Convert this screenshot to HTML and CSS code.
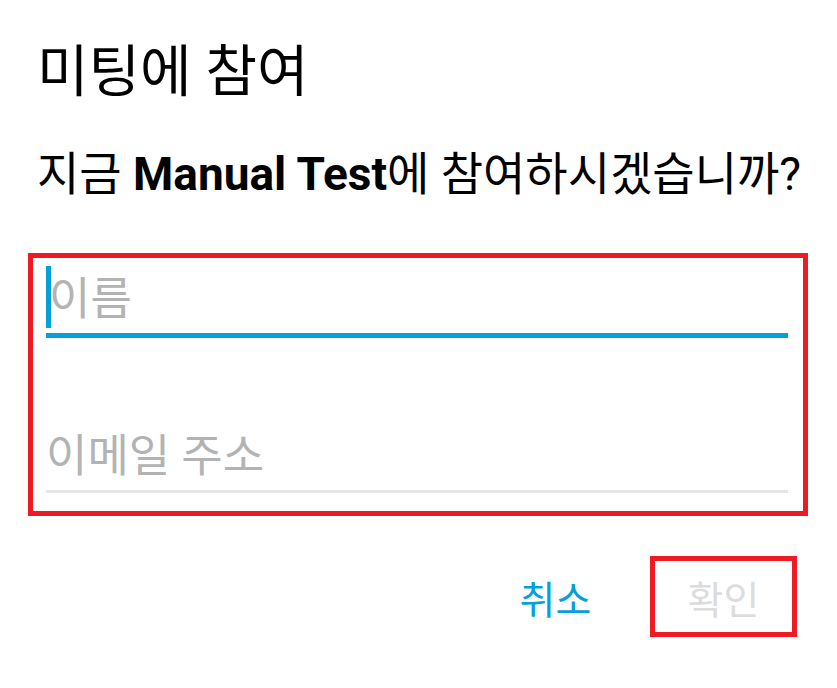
FILE: index.html
```html
<!DOCTYPE html>
<html lang="ko">
<head>
  <meta charset="UTF-8" />
  <meta name="viewport" content="width=device-width, initial-scale=1" />
  <title>미팅에 참여</title>
  <link rel="stylesheet" href="styles.css">
</head>
<body>
  <div class="dialog">
    <!-- Dialog heading -->
    <h1 class="title">미팅에 참여</h1>
    <p class="message">지금 <strong>Manual Test</strong>에 참여하시겠습니까?</p>

    <!-- Input fields (outlined) -->
    <div class="fields">
      <div class="field active">
        <span class="cursor"></span>
        <span class="placeholder">이름</span>
      </div>
      <div class="field">
        <span class="placeholder">이메일 주소</span>
      </div>
    </div>

    <!-- Buttons -->
    <div class="actions">
      <button class="btn cancel">취소</button>
      <button class="btn ok" disabled>확인</button>
    </div>
  </div>
</body>
</html>
```

FILE: styles.css
```css
/* Basic reset */
body, html {
  margin: 0;
  padding: 0;
  background: #fff;
  font-family: Roboto, "Noto Sans CJK KR", sans-serif;
  color: #000;
}

.dialog {
  padding: 32px 0 0 0;
}

/* Heading and message */
.title {
  margin: 0 0 0 37px;
  font-size: 56px;
  font-weight: normal;
  line-height: 80px;
}

.message {
  margin: 34px 0 0 37px;
  font-size: 46px;
  line-height: 56px;
  white-space: nowrap;
}

.message strong {
  font-weight: bold;
}

/* Outlined field area */
.fields {
  margin: 51px 29px 0 28px;
  border: 5px solid #ed1c24;
  padding: 8px 15px 18px 13px;
}

.field {
  position: relative;
  height: 62px;
  padding-bottom: 5px;
  border-bottom: 3px solid #e6e6e6;
  display: flex;
  align-items: center;
}

.field + .field {
  margin-top: 85px;
}

.field.active {
  border-bottom: 5px solid #06a0d9;
}

.cursor {
  width: 5px;
  height: 62px;
  background: #06a0d9;
}

.placeholder {
  font-size: 45px;
  color: #b3b3b3;
  line-height: 62px;
  margin-top: 6px;
}

.field.active .placeholder {
  margin-left: -2px;
}

/* Bottom buttons */
.actions {
  display: flex;
  justify-content: flex-end;
  gap: 21px;
  margin: 40px 40px 0 0;
}

.btn {
  width: 147px;
  height: 81px;
  border: 5px solid transparent;
  background: none;
  font-family: Roboto, "Noto Sans CJK KR", sans-serif;
  font-size: 39px;
  padding: 0;
}

.btn.cancel {
  color: #06a0d9;
}

.btn.ok {
  color: #dcdcdc;
  border-color: #ed1c24;
}
```
